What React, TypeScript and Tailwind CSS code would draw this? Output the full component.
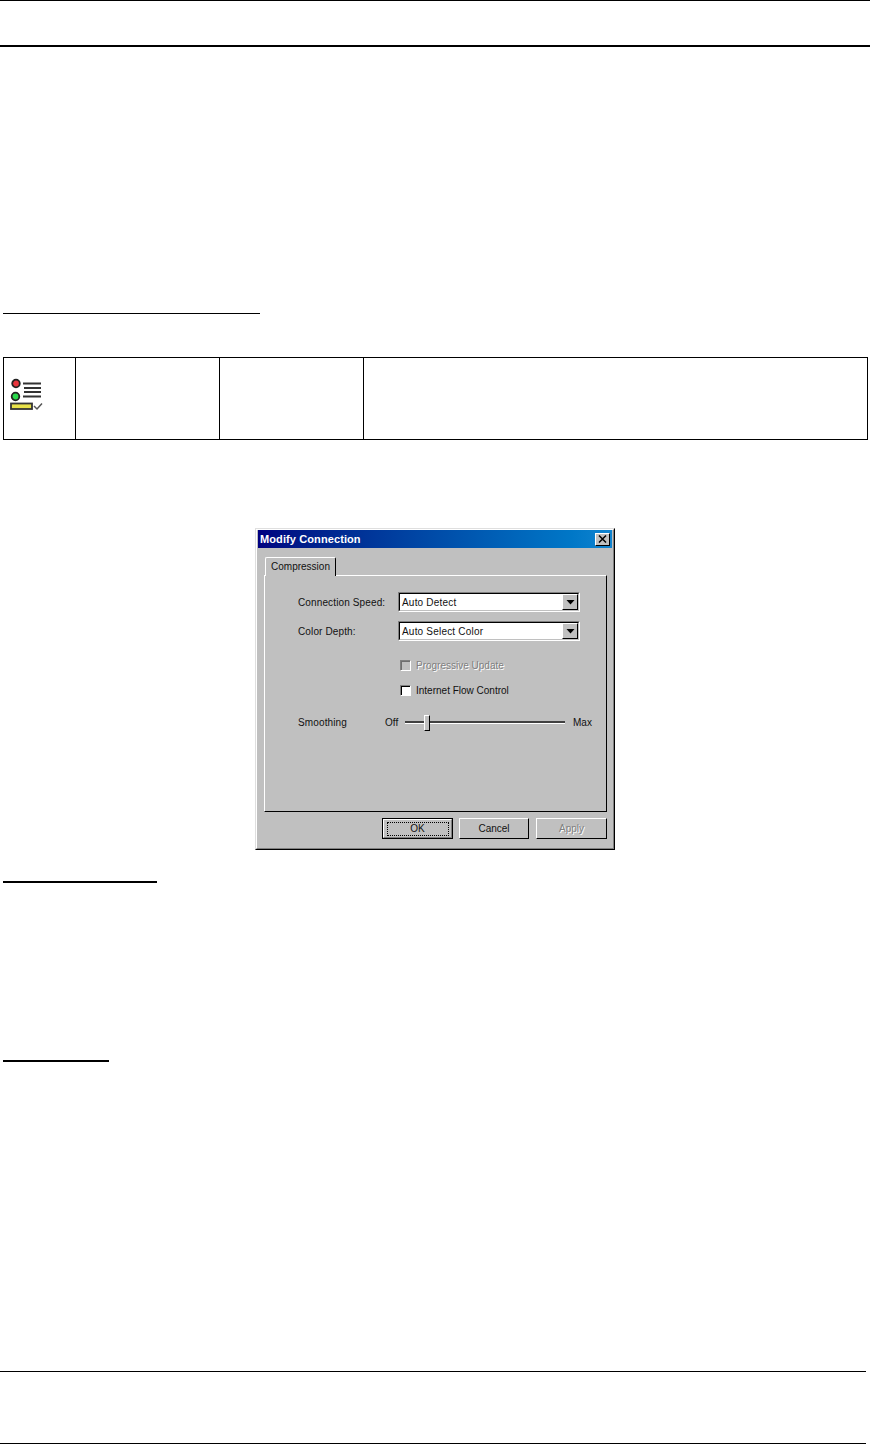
import React from "react";

const Raised = ({ className = "", children }: { className?: string; children?: React.ReactNode }) => (
  <div className={"border border-t-white border-l-white border-r-[#808080] border-b-[#808080] bg-[#c0c0c0] " + className}>{children}</div>
);

const Combo = ({ value }: { value: string }) => (
  <div className="flex h-[20px] w-[182px] border border-t-[#808080] border-l-[#808080] border-r-white border-b-white">
    <div className="flex flex-1 items-center justify-between border border-t-black border-l-black border-r-[#c0c0c0] border-b-[#c0c0c0] bg-white pl-[2px]">
      <span className="pt-px text-[10px] leading-none tracking-[0.2px] text-[#111]">{value}</span>
      <div className="flex h-[16px] w-[16px] items-center justify-center border border-t-white border-l-white border-r-black border-b-black bg-[#c0c0c0]">
        <svg width="9" height="5" viewBox="0 0 9 5"><path d="M0.5 0H8.5L4.5 4.5Z" fill="#000" /></svg>
      </div>
    </div>
  </div>
);

const Check = ({ label, disabled }: { label: string; disabled?: boolean }) => (
  <div className="flex items-center gap-[5px]">
    <div className={"h-[11px] w-[11px] border border-t-[#808080] border-l-[#808080] border-r-white border-b-white " + (disabled ? "bg-[#c0c0c0]" : "bg-white")}>
      <div className={"h-full w-full border-t border-l " + (disabled ? "border-[#6f6f6f]" : "border-black")} />
    </div>
    <span className={"text-[10px] leading-none " + (disabled ? "text-[#808080] [text-shadow:1px_1px_0_#fff]" : "text-[#111]")}>{label}</span>
  </div>
);

const DlgButton = ({ children, primary, disabled }: { children: React.ReactNode; primary?: boolean; disabled?: boolean }) => (
  <div className={"flex h-[21px] items-center justify-center " + (primary ? "w-[71px] border border-black bg-[#c0c0c0]" : disabled ? "w-[71px]" : "mr-[1px] w-[70px]")}>
    <Raised className={"flex h-full w-full items-center justify-center " + (primary ? "border-b-[#808080]" : "border-r-black border-b-black")}>
      {primary ? (
        <div className="flex h-[14px] w-[62px] items-center justify-center border border-dotted border-black text-[10px] leading-none text-[#111]">{children}</div>
      ) : (
        <span className={"text-[10px] leading-none " + (disabled ? "text-[#808080] [text-shadow:1px_1px_0_#fff]" : "text-[#111]")}>{children}</span>
      )}
    </Raised>
  </div>
);

const Dialog = () => (
  <div className="mx-auto mt-[88px] flex h-[322px] w-[360px] flex-col border border-t-[#dfdfdf] border-l-[#dfdfdf] border-r-black border-b-black bg-[#c0c0c0] font-['Liberation_Sans',sans-serif]">
    <div className="flex flex-1 flex-col border border-t-white border-l-white border-r-[#808080] border-b-[#808080] px-[1px]">
      <div className="flex h-[18px] shrink-0 items-center justify-between bg-gradient-to-r from-[#000080] to-[#1084d0] pl-[2px] pr-[2px]">
        <span className="text-[11px] font-bold leading-none tracking-[0.1px] text-white">Modify Connection</span>
        <Raised className="flex h-[13px] w-[15px] items-center justify-center border-r-black border-b-black">
          <svg width="9" height="8" viewBox="0 0 9 8"><path d="M1 0.5L8 7.5M8 0.5L1 7.5" stroke="#000" strokeWidth="1.5" /></svg>
        </Raised>
      </div>
      <div className="flex flex-1 flex-col pl-[6px] pt-[9px]">
        <div className="relative z-10 -mb-px ml-[1px] flex h-[19px] w-[71px] items-center justify-center self-start rounded-t-[2px] border border-b-0 border-t-white border-l-white border-r-black bg-[#c0c0c0] text-[10px] leading-none text-[#111]">
          Compression
        </div>
        <div className="flex h-[237px] w-[343px] flex-col border border-t-white border-l-white border-r-black border-b-black pl-[33px] pt-[16px]">
          <div className="flex items-center">
            <span className="w-[100px] pt-px text-[10px] leading-none tracking-[0.13px] text-[#111]">Connection Speed:</span>
            <Combo value="Auto Detect" />
          </div>
          <div className="mt-[9px] flex items-center">
            <span className="w-[100px] pt-px text-[10px] leading-none tracking-[0.13px] text-[#111]">Color Depth:</span>
            <Combo value="Auto Select Color" />
          </div>
          <div className="ml-[102px] mt-[19px]"><Check label="Progressive Update" disabled /></div>
          <div className="ml-[102px] mt-[14px]"><Check label="Internet Flow Control" /></div>
          <div className="mt-[18px] flex h-[16px] items-center">
            <span className="w-[87px] pt-px text-[10px] leading-none tracking-[0.13px] text-[#111]">Smoothing</span>
            <span className="w-[20px] pt-px text-[10px] leading-none text-[#111]">Off</span>
            <div className="relative h-[3px] w-[160px] border-t border-t-[#404040] border-b border-b-white bg-[#404040]">
              <div className="absolute left-[19px] top-[-7px] h-[16px] w-[6px] border border-t-white border-l-white border-r-black border-b-black bg-[#c0c0c0]" />
            </div>
            <span className="ml-[8px] pt-px text-[10px] leading-none text-[#111]">Max</span>
          </div>
        </div>
        <div className="mt-[6px] flex w-[343px] justify-end gap-[6px]">
          <DlgButton primary>OK</DlgButton>
          <DlgButton>Cancel</DlgButton>
          <DlgButton disabled>Apply</DlgButton>
        </div>
      </div>
    </div>
  </div>
);

const Icon = () => (
  <svg width="34" height="36" viewBox="0 0 34 36" className="ml-[6px] mt-[19px] blur-[0.4px]">
    <circle cx="6" cy="6.5" r="3.8" fill="#e8343c" stroke="#222" strokeWidth="1.8" />
    <circle cx="5.5" cy="19.5" r="3.8" fill="#28d84a" stroke="#222" strokeWidth="1.8" />
    <path d="M13 6.5H31M14 11H31M14 15H31M13 19.5H31" stroke="#333" strokeWidth="2.2" />
    <rect x="1" y="26.5" width="21" height="5.5" fill="#e8e24a" stroke="#333" strokeWidth="1.8" />
    <path d="M24 29L27 32L32 26.5" fill="none" stroke="#555" strokeWidth="1.5" />
  </svg>
);

export default function App() {
  return (
    <div className="h-[1445px] w-[870px] overflow-hidden bg-white">
      <div className="h-px w-full bg-black" />
      <div className="mt-[44px] h-[2px] w-full bg-black" />
      <div className="ml-[3px] mt-[266px] h-px w-[257px] bg-black" />
      <div className="ml-[3px] mt-[43px] flex h-[83px] w-[865px] border border-black">
        <div className="w-[71px]"><Icon /></div>
        <div className="w-[144px] border-l border-black" />
        <div className="w-[144px] border-l border-black" />
        <div className="flex-1 border-l border-black" />
      </div>
      <Dialog />
      <div className="ml-[3px] mt-[31px] h-[2px] w-[154px] bg-black" />
      <div className="ml-[3px] mt-[177px] h-[2px] w-[106px] bg-black" />
      <div className="mt-[309px] h-px w-[866px] bg-black" />
      <div className="mt-[71px] h-px w-[866px] bg-black" />
    </div>
  );
}
